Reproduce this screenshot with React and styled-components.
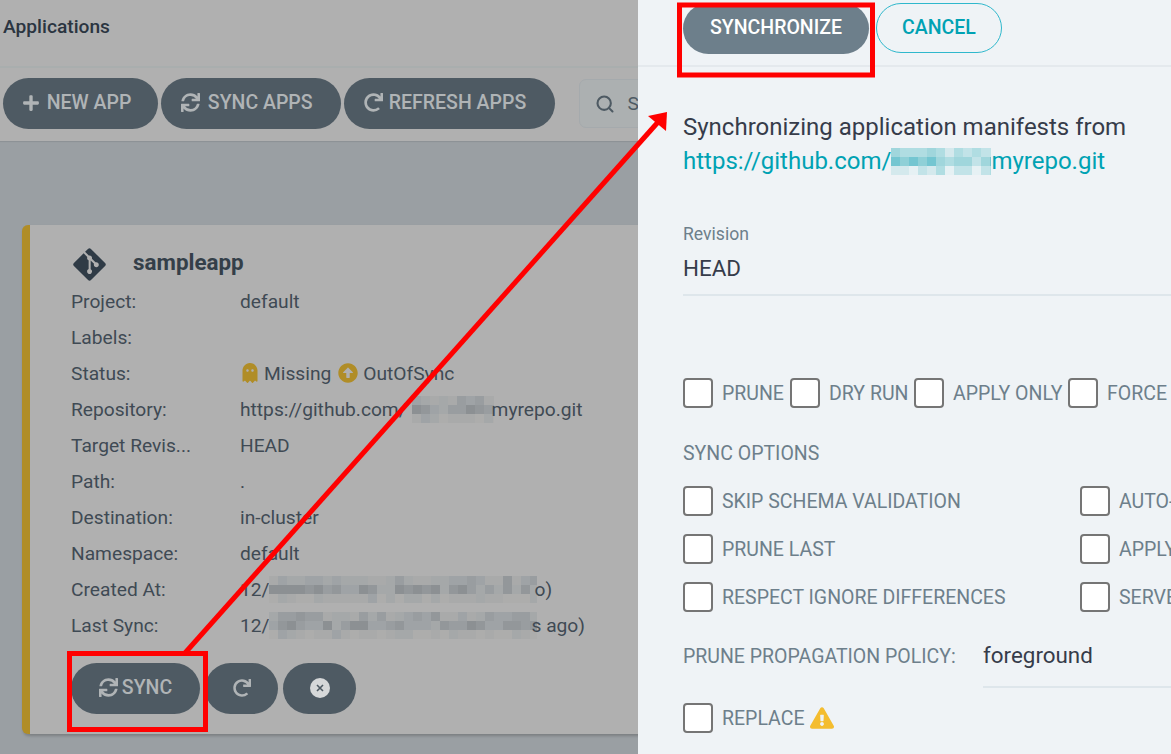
import React from 'react';
import styled, { createGlobalStyle } from 'styled-components';
import { FaPlus, FaSync, FaRedo, FaGitAlt, FaGhost, FaArrowAltCircleUp, FaExclamationTriangle } from 'react-icons/fa';
import { Search } from 'lucide-react';

const Global = createGlobalStyle`
  html, body { margin: 0; padding: 0; background: #eff3f6; }
  body { font-family: Roboto, "Liberation Sans", sans-serif; }
  * { box-sizing: border-box; }
`;

const Page = styled.div`
  position: relative;
  display: flex;
  width: 1171px;
  height: 754px;
  overflow: hidden;
`;
const Left = styled.div`
  width: 638px;
  flex: none;
  background: #9a9fa3;
  overflow: hidden;
  display: flex;
  flex-direction: column;
`;
const TopBar = styled.div`
  height: 68px;
  flex: none;
  background: #b0b0b0;
  border-bottom: 2px solid #a9aeae;
  padding: 0 3px 13px;
  display: flex;
  align-items: center;
  font-size: 19.2px;
  font-weight: 500;
  color: #2b3541;
`;
const DarkButton = styled.div`
  height: 51px;
  width: ${p => p.$w}px;
  flex: none;
  border-radius: 25.5px;
  background: #4e5a63;
  color: #b0b4b6;
  font-size: 19.5px;
  font-weight: 500;
  display: flex;
  align-items: center;
  justify-content: center;
  gap: ${p => p.$gap ?? 6}px;
  padding: 0 ${p => p.$pr ?? 0}px 2px 0;
  white-space: nowrap;
  svg { flex: none; }
`;
const ToolBar = styled.div`
  height: 73px;
  flex: none;
  background: #b0b0b0;
  padding: 10px 0 0 3px;
  display: flex;
  gap: 3px;
  align-items: flex-start;
  box-shadow: 0 1px 1px rgba(0,0,0,.08);
`;
const SearchBox = styled.div`
  margin: 1px 0 0 21px;
  width: 200px;
  height: 49px;
  flex: none;
  border: 1px solid #a5aaad;
  border-radius: 7px;
  background: #acb0b1;
  color: #4e5a63;
  font-size: 19.2px;
  display: flex;
  align-items: center;
  gap: 13px;
  padding-left: 15px;
`;
const CardArea = styled.div`
  padding: 84px 0 0 22px;
`;
const Card = styled.div`
  width: 640px;
  height: 509px;
  background: #b0b0b0;
  border-left: 8px solid #b08d27;
  border-radius: 6px 0 0 6px;
  box-shadow: 1px 2px 3px rgba(0,0,0,.2);
  padding: 20px 0 0 41px;
`;
const CardTitle = styled.div`
  height: 38px;
  display: flex;
  align-items: center;
  gap: 25px;
  svg { color: #2f3b46; flex: none; }
`;
const CardName = styled.span`
  font-size: 22.4px;
  font-weight: 700;
  color: #343f49;
  padding-bottom: 4px;
`;
const Row = styled.div`
  height: 36px;
  display: flex;
  align-items: center;
  font-size: 19.2px;
  color: #3f4a54;
  white-space: nowrap;
`;
const RowLabel = styled.div`
  width: 169px;
  flex: none;
`;
const RowValue = styled.div`
  display: flex;
  align-items: center;
`;
const StatusIcon = styled.span`
  display: inline-flex;
  color: #b08d27;
  margin: ${p => p.$m};
`;
const CardActions = styled.div`
  display: flex;
  gap: 5px;
  margin-top: 20px;
`;
const Right = styled.div`
  flex: 1;
  background: #eff3f6;
  overflow: hidden;
  white-space: nowrap;
`;
const PanelHead = styled.div`
  height: 67px;
  border-bottom: 2px solid #e4e9ed;
  padding: 3px 0 0 45px;
  display: flex;
  gap: 7px;
  align-items: flex-start;
`;
const PrimaryButton = styled.div`
  width: 186px;
  height: 51px;
  border-radius: 25.5px;
  background: #6d7f8b;
  color: #fff;
  font-size: 19.5px;
  font-weight: 500;
  padding-bottom: 3px;
  display: flex;
  align-items: center;
  justify-content: center;
`;
const OutlineButton = styled.div`
  width: 126px;
  height: 50px;
  border-radius: 25px;
  border: 1.5px solid #2fb8cc;
  color: #00a2b3;
  font-size: 19.5px;
  font-weight: 500;
  padding-bottom: 2px;
  display: flex;
  align-items: center;
  justify-content: center;
`;
const PanelBody = styled.div`
  padding: 43px 0 0 45px;
`;
const Intro = styled.div`
  font-size: 24px;
  line-height: 34px;
  color: #363c4a;
`;
const Link = styled.div`
  display: flex;
  align-items: center;
  color: #00a2b3;
`;
const Field = styled.div`
  margin-top: 46px;
  height: 72px;
  border-bottom: 2px solid #dee6eb;
`;
const FieldLabel = styled.div`
  font-size: 17.6px;
  line-height: 20px;
  color: #6d7f8b;
`;
const FieldValue = styled.div`
  margin-top: 9px;
  font-size: 22.4px;
  line-height: 30px;
  color: #363c4a;
`;
const CheckRow = styled.div`
  display: flex;
  height: 30px;
  margin-top: ${p => p.$top}px;
`;
const CheckItem = styled.div`
  display: flex;
  align-items: center;
  width: ${p => p.$w ? `${p.$w}px` : 'auto'};
  flex: none;
  font-size: 19.5px;
  color: #6d7f8b;
`;
const Box = styled.span`
  width: 30px;
  height: 30px;
  flex: none;
  border: 2px solid #757575;
  border-radius: 4px;
  background: #fff;
  margin-right: 9px;
`;
const SectionTitle = styled.div`
  margin-top: 31px;
  font-size: 19.5px;
  line-height: 30px;
  color: #6d7f8b;
`;
const Policy = styled.div`
  display: flex;
  margin-top: 21px;
  height: 60px;
`;
const PolicyLabel = styled.div`
  width: 300px;
  flex: none;
  font-size: 19.5px;
  line-height: 48px;
  color: #6d7f8b;
`;
const PolicyValue = styled.div`
  flex: 1;
  font-size: 22.4px;
  line-height: 44px;
  color: #363c4a;
  border-bottom: 2px solid #dee6eb;
  height: 55px;
`;
const WarnIcon = styled.span`
  display: inline-flex;
  color: #f4bd2f;
  margin-left: 6px;
`;
const Pix = styled.svg`
  flex: none;
  display: block;
  margin: ${p => p.$m || '0'};
`;
const Annotation = styled.svg`
  position: absolute;
  left: 0;
  top: 0;
  pointer-events: none;
`;

const Pixelated = ({ w, h = 27, size = 9, palette, seed = 1, m }) => {
  const cells = [];
  let s = seed * 7919;
  for (let y = 0; y < h; y += size) {
    for (let x = 0; x < w; x += size) {
      s = (s * 1103515245 + 12345) & 0x7fffffff;
      const r = (s >> 8) % 100 / 100;
      const level = y === size ? 0.35 + 0.65 * r : y === 0 ? 0.15 + 0.6 * r : 0.45 * r;
      cells.push(<rect key={`${x}-${y}`} x={x} y={y} width={size} height={size} fill={palette[Math.floor(level * palette.length * 0.999)]} />);
    }
  }
  return <Pix $m={m} width={w} height={h}>{cells}</Pix>;
};

const dim = ['#adadac', '#a9aaaa', '#a5a8a9', '#9fa3a6', '#999da0', '#93979a', '#8c9093'];
const teal = ['#e6f1f4', '#d4e9ed', '#c2e3e8', '#b0dde2', '#a0d6dc', '#8fd0d7', '#74c6d1'];

const CloseIcon = () => (
  <svg width="20" height="20" viewBox="0 0 20 20">
    <circle cx="10" cy="10" r="10" fill="#d6d8d9" />
    <path d="M7 7l6 6M13 7l-6 6" stroke="#4e5a63" strokeWidth="1.6" />
  </svg>
);

const rows = [
  ['Project:', 'default'],
  ['Labels:', ''],
  ['Status:', <><StatusIcon $m="0 4px 0 0"><FaGhost size={20} /></StatusIcon>Missing<StatusIcon $m="0 5px 0 7px"><FaArrowAltCircleUp size={20} /></StatusIcon>OutOfSync</>],
  ['Repository:', <>https://github.com/<Pixelated w={82} palette={dim} seed={3} m="0 -2px 0 5px" />myrepo.git</>],
  ['Target Revis...', 'HEAD'],
  ['Path:', '.'],
  ['Destination:', 'in-cluster'],
  ['Namespace:', 'default'],
  ['Created At:', <>12/<Pixelated w={268} palette={dim} seed={5} m="0 -3px 0 0" />o)</>],
  ['Last Sync:', <>12/<Pixelated w={268} palette={dim} seed={9} m="0 -6px 0 0" />s ago)</>],
];

const Check = ({ w, children }) => <CheckItem $w={w}><Box />{children}</CheckItem>;

export default function App() {
  return (
    <Page>
      <Global />
      <Left>
        <TopBar>Applications</TopBar>
        <ToolBar>
          <DarkButton $w={155} $gap={7} $pr={8}><FaPlus size={18} />NEW APP</DarkButton>
          <DarkButton $w={179.5} $gap={8} $pr={8}><FaSync size={19} />SYNC APPS</DarkButton>
          <DarkButton $w={211} $pr={8}><FaRedo size={19} />REFRESH APPS</DarkButton>
          <SearchBox><Search size={20} strokeWidth={2.5} />Search</SearchBox>
        </ToolBar>
        <CardArea>
          <Card>
            <CardTitle><FaGitAlt size={37} /><CardName>sampleapp</CardName></CardTitle>
            {rows.map(([l, v]) => (
              <Row key={l}><RowLabel>{l}</RowLabel><RowValue>{v}</RowValue></Row>
            ))}
            <CardActions>
              <DarkButton $w={129} $gap={4}><FaSync size={19} />SYNC</DarkButton>
              <DarkButton $w={73}><FaRedo size={18} /></DarkButton>
              <DarkButton $w={73}><CloseIcon /></DarkButton>
            </CardActions>
          </Card>
        </CardArea>
      </Left>
      <Right>
        <PanelHead>
          <PrimaryButton>SYNCHRONIZE</PrimaryButton>
          <OutlineButton>CANCEL</OutlineButton>
        </PanelHead>
        <PanelBody>
          <Intro>
            Synchronizing application manifests from
            <Link>https://github.com/<Pixelated w={100} palette={teal} seed={4} />myrepo.git</Link>
          </Intro>
          <Field>
            <FieldLabel>Revision</FieldLabel>
            <FieldValue>HEAD</FieldValue>
          </Field>
          <CheckRow $top={82}>
            <Check w={107}>PRUNE</Check>
            <Check w={124}>DRY RUN</Check>
            <Check w={154}>APPLY ONLY</Check>
            <Check>FORCE</Check>
          </CheckRow>
          <SectionTitle>SYNC OPTIONS</SectionTitle>
          <CheckRow $top={17}><Check w={397}>SKIP SCHEMA VALIDATION</Check><Check>AUTO-CREATE NAMESPACE</Check></CheckRow>
          <CheckRow $top={18}><Check w={397}>PRUNE LAST</Check><Check>APPLY OUT OF SYNC ONLY</Check></CheckRow>
          <CheckRow $top={18}><Check w={397}>RESPECT IGNORE DIFFERENCES</Check><Check>SERVER-SIDE APPLY</Check></CheckRow>
          <Policy>
            <PolicyLabel>PRUNE PROPAGATION POLICY:</PolicyLabel>
            <PolicyValue>foreground</PolicyValue>
          </Policy>
          <CheckRow $top={10}>
            <Check>REPLACE<WarnIcon><FaExclamationTriangle size={24} /></WarnIcon></Check>
          </CheckRow>
        </PanelBody>
      </Right>
      <Annotation width="1171" height="754" viewBox="0 0 1171 754">
        <rect x="679.5" y="5" width="193" height="70" fill="none" stroke="#f00" strokeWidth="5" />
        <rect x="69.5" y="653.5" width="136" height="76" fill="none" stroke="#f00" strokeWidth="5" />
        <line x1="185" y1="653" x2="659" y2="121" stroke="#f00" strokeWidth="5" />
        <polygon points="667,112 666,131 648,116" fill="#f00" />
      </Annotation>
    </Page>
  );
}
